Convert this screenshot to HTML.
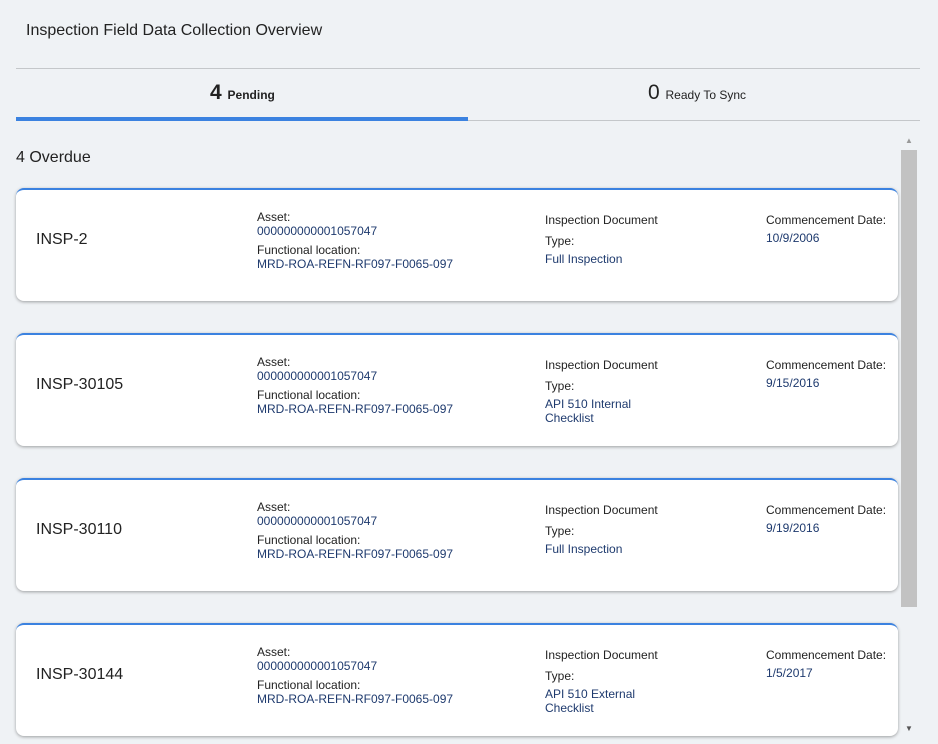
<!DOCTYPE html>
<html><head><style>
body{margin:0;width:938px;height:744px;background:#eff2f5;font-family:"Liberation Sans",sans-serif;position:relative;overflow:hidden;color:#1d1d1d}
.a{position:absolute;white-space:nowrap}
.card{position:absolute;left:16px;width:882px;height:113px;background:#fff;border-top:2px solid #3b82e0;border-radius:8px;box-shadow:0 1px 3px rgba(0,0,0,.35);box-sizing:border-box}
.id{position:absolute;left:20px;top:41px;font-size:16px;color:#222}
.l{font-size:12px;color:#222}
.v{font-size:12px;color:#1e3a6e}
</style></head><body>
<div class="a" style="left:26px;top:22px;font-size:16px;color:#222">Inspection Field Data Collection Overview</div>
<div class="a" style="left:16px;top:68px;width:904px;height:1px;background:#c4c7ca"></div>
<div class="a" style="left:210px;top:81px;font-size:21px;font-weight:bold;color:#222">4 <span style="font-size:12px">Pending</span></div>
<div class="a" style="left:648px;top:81px;font-size:21px;color:#222">0 <span style="font-size:12px">Ready To Sync</span></div>
<div class="a" style="left:16px;top:117px;width:452px;height:4px;background:#3b82e0"></div>
<div class="a" style="left:468px;top:120px;width:452px;height:1px;background:#c4c7ca"></div>
<div class="a" style="left:16px;top:149px;font-size:16px;color:#222">4 Overdue</div>
<div class="a" style="left:901px;top:150px;width:16px;height:457px;background:#c2c2c2"></div>
<div class="a" style="left:905px;top:136px;font-size:8px;color:#999">▲</div>
<div class="a" style="left:905px;top:724px;font-size:8px;color:#555">▼</div>

<div class="card" style="top:188px"><div class="id">INSP-2</div>
<div class="a l" style="left:241px;top:20px">Asset:</div><div class="a v" style="left:241px;top:34px">000000000001057047</div>
<div class="a l" style="left:241px;top:53px">Functional location:</div><div class="a v" style="left:241px;top:67px">MRD-ROA-REFN-RF097-F0065-097</div>
<div class="a l" style="left:529px;top:23px">Inspection Document</div><div class="a l" style="left:529px;top:44px">Type:</div><div class="a v" style="left:529px;top:62px">Full Inspection</div>
<div class="a l" style="left:750px;top:23px">Commencement Date:</div><div class="a v" style="left:750px;top:41px">10/9/2006</div></div>

<div class="card" style="top:333px"><div class="id">INSP-30105</div>
<div class="a l" style="left:241px;top:20px">Asset:</div><div class="a v" style="left:241px;top:34px">000000000001057047</div>
<div class="a l" style="left:241px;top:53px">Functional location:</div><div class="a v" style="left:241px;top:67px">MRD-ROA-REFN-RF097-F0065-097</div>
<div class="a l" style="left:529px;top:23px">Inspection Document</div><div class="a l" style="left:529px;top:44px">Type:</div><div class="a v" style="left:529px;top:62px">API 510 Internal<br>Checklist</div>
<div class="a l" style="left:750px;top:23px">Commencement Date:</div><div class="a v" style="left:750px;top:41px">9/15/2016</div></div>

<div class="card" style="top:478px"><div class="id">INSP-30110</div>
<div class="a l" style="left:241px;top:20px">Asset:</div><div class="a v" style="left:241px;top:34px">000000000001057047</div>
<div class="a l" style="left:241px;top:53px">Functional location:</div><div class="a v" style="left:241px;top:67px">MRD-ROA-REFN-RF097-F0065-097</div>
<div class="a l" style="left:529px;top:23px">Inspection Document</div><div class="a l" style="left:529px;top:44px">Type:</div><div class="a v" style="left:529px;top:62px">Full Inspection</div>
<div class="a l" style="left:750px;top:23px">Commencement Date:</div><div class="a v" style="left:750px;top:41px">9/19/2016</div></div>

<div class="card" style="top:623px"><div class="id">INSP-30144</div>
<div class="a l" style="left:241px;top:20px">Asset:</div><div class="a v" style="left:241px;top:34px">000000000001057047</div>
<div class="a l" style="left:241px;top:53px">Functional location:</div><div class="a v" style="left:241px;top:67px">MRD-ROA-REFN-RF097-F0065-097</div>
<div class="a l" style="left:529px;top:23px">Inspection Document</div><div class="a l" style="left:529px;top:44px">Type:</div><div class="a v" style="left:529px;top:62px">API 510 External<br>Checklist</div>
<div class="a l" style="left:750px;top:23px">Commencement Date:</div><div class="a v" style="left:750px;top:41px">1/5/2017</div></div>
</body></html>
